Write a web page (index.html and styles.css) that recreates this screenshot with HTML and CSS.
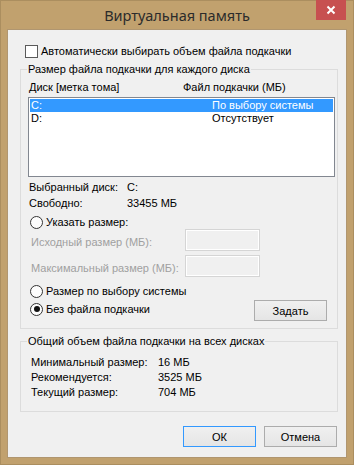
FILE: index.html
```html
<!DOCTYPE html>
<html lang="ru">
<head>
  <meta charset="UTF-8" />
  <title>Виртуальная память</title>
  <link rel="stylesheet" href="styles.css">
</head>
<body>
  <div class="window">
    <div class="titlebar">
      <div class="title">Виртуальная память</div>
      <button type="button" class="close" aria-label="Закрыть">
        <svg width="10" height="10" viewBox="0 0 10 10">
          <path d="M1.5 1.5 L8.5 8.5 M8.5 1.5 L1.5 8.5" stroke="#fff" stroke-width="2" fill="none"/>
        </svg>
      </button>
    </div>

    <div class="client">
      <label class="check-row">
        <span class="checkbox"></span>
        <span>Автоматически выбирать объем файла подкачки</span>
      </label>

      <!-- размер по дискам -->
      <fieldset class="group group-disks">
        <legend>Размер файла подкачки для каждого диска</legend>
        <div class="list-head">
          <span class="head-disk">Диск [метка тома]</span>
          <span>Файл подкачки (МБ)</span>
        </div>
        <div class="listbox">
          <div class="list-row selected">
            <span class="row-disk">C:</span>
            <span>По выбору системы</span>
          </div>
          <div class="list-row">
            <span class="row-disk">D:</span>
            <span>Отсутствует</span>
          </div>
        </div>

        <div class="info">
          <div class="info-row"><span class="info-label">Выбранный диск:</span><span>C:</span></div>
          <div class="info-row"><span class="info-label">Свободно:</span><span>33455 МБ</span></div>
        </div>

        <div class="radio-row radio-custom">
          <span class="radio"></span>
          <span>Указать размер:</span>
        </div>
        <div class="size-row">
          <span class="size-label">Исходный размер (МБ):</span>
          <span class="textbox"></span>
        </div>
        <div class="size-row size-max">
          <span class="size-label">Максимальный размер (МБ):</span>
          <span class="textbox"></span>
        </div>
        <div class="radio-row radio-system">
          <span class="radio"></span>
          <span>Размер по выбору системы</span>
        </div>
        <div class="last-row">
          <div class="radio-row">
            <span class="radio checked"></span>
            <span>Без файла подкачки</span>
          </div>
          <button type="button" class="btn btn-set">Задать</button>
        </div>
      </fieldset>

      <!-- общий объем -->
      <fieldset class="group group-total">
        <legend>Общий объем файла подкачки на всех дисках</legend>
        <div class="total-row"><span class="total-label">Минимальный размер:</span><span>16 МБ</span></div>
        <div class="total-row"><span class="total-label">Рекомендуется:</span><span>3525 МБ</span></div>
        <div class="total-row"><span class="total-label">Текущий размер:</span><span>704 МБ</span></div>
      </fieldset>

      <div class="dialog-buttons">
        <button type="button" class="btn btn-default">ОК</button>
        <button type="button" class="btn">Отмена</button>
      </div>
    </div>
  </div>
</body>
</html>
```

FILE: styles.css
```css
:root {
  --frame: #c1a16e;
  --client: #f0f0f0;
  --group-border: #dcdcdc;
  --disabled: #a0a0a0;
  --select: #3399ff;
  --font: "Liberation Sans", Arial, sans-serif;
}

html, body {
  margin: 0;
  padding: 0;
}

body {
  font-family: var(--font);
  font-size: 11px;
  color: #000;
  white-space: nowrap;
}

.window {
  width: 354px;
  height: 465px;
  box-sizing: border-box;
  background-color: var(--frame);
  box-shadow: inset 0 0 0 1px #ab8e5f;
  display: flex;
  flex-direction: column;
}

.titlebar {
  height: 30px;
  flex-shrink: 0;
  display: grid;
  grid-template-columns: 1fr auto 1fr;
}

.title {
  grid-column: 2;
  font-family: "Noto Sans", sans-serif;
  font-size: 14.5px;
  line-height: 30px;
  color: #2b2b2b;
}

.close {
  grid-column: 3;
  justify-self: end;
  align-self: start;
  width: 30px;
  height: 20px;
  margin-right: 8px;
  padding: 0;
  border: none;
  background-color: #c75050;
  display: flex;
  align-items: center;
  justify-content: center;
}

.client {
  flex: 1;
  min-height: 0;
  margin: 0 8px 8px;
  padding: 14px 8px 10px 12px;
  background-color: var(--client);
  box-shadow: 0 0 0 1px #b09670;
  display: flex;
  flex-direction: column;
}

.check-row {
  display: flex;
  align-items: center;
  gap: 3px;
  height: 15px;
  line-height: 15px;
  padding-left: 5px;
}

.checkbox {
  flex-shrink: 0;
  width: 11px;
  height: 11px;
  border: 1px solid #5a5a5a;
  background-color: #fff;
}

.group {
  margin: 0;
  min-width: 0;
  border: 1px solid var(--group-border);
  padding: 0 2px 0 7px;
}

.group legend {
  padding: 0 1px;
  margin-left: -1px;
  line-height: 15px;
}

.group-disks {
  margin-top: 3px;
  padding-top: 3px;
  padding-bottom: 7px;
}

.list-head {
  display: flex;
  line-height: 15px;
  padding-left: 1px;
}

.head-disk {
  flex-shrink: 0;
  width: 154px;
}

.listbox {
  margin-top: 2px;
  width: 307px;
  height: 80px;
  box-sizing: border-box;
  border: 1px solid #828790;
  background-color: #fff;
  padding: 1px;
}

.list-row {
  display: flex;
  height: 13px;
  line-height: 13px;
  padding-left: 1px;
}

.list-row.selected {
  background-color: var(--select);
  color: #fff;
}

.row-disk {
  flex-shrink: 0;
  width: 181px;
}

.info {
  margin-top: 2px;
  padding-left: 1px;
}

.info-row {
  display: flex;
  line-height: 16px;
}

.info-label {
  flex-shrink: 0;
  width: 98px;
}

.radio-row {
  display: flex;
  align-items: center;
  gap: 3px;
  height: 14px;
  line-height: 14px;
  padding-left: 2px;
}

.radio {
  flex-shrink: 0;
  width: 11px;
  height: 11px;
  border: 1px solid #333;
  border-radius: 50%;
  background-color: #fdfdfd;
  position: relative;
}

.radio.checked::after {
  content: "";
  position: absolute;
  left: 2.5px;
  top: 2.5px;
  width: 6px;
  height: 6px;
  border-radius: 50%;
  background-color: #111;
}

.radio-custom {
  margin-top: 4px;
}

.size-row {
  display: flex;
  align-items: center;
  height: 22px;
  padding-left: 3px;
  color: var(--disabled);
}

.size-label {
  flex-shrink: 0;
  width: 154px;
  padding-top: 3px;
}

.size-max {
  margin-top: 4px;
}

.textbox {
  flex-shrink: 0;
  width: 75px;
  height: 22px;
  box-sizing: border-box;
  border: 1px solid #d5d5d5;
  box-shadow: inset 0 0 0 1px #fff;
}

.radio-system {
  margin-top: 7px;
}

.last-row {
  margin-top: 2px;
  height: 21px;
  display: flex;
  justify-content: space-between;
  align-items: flex-start;
}

.last-row .radio-row {
  margin-top: 2px;
}

.btn {
  flex-shrink: 0;
  width: 73px;
  height: 21px;
  padding: 0;
  border: 1px solid #acacac;
  background: linear-gradient(#f0f0f0, #e5e5e5);
  font-family: var(--font);
  font-size: 11px;
  color: #000;
}

.btn-set {
  margin-right: 8px;
}

.btn-default {
  border-color: var(--select);
}

.group-total {
  margin-top: 5px;
  padding-top: 6px;
  padding-bottom: 11px;
}

.total-row {
  display: flex;
  line-height: 15px;
  padding-left: 3px;
}

.total-label {
  flex-shrink: 0;
  width: 127px;
}

.dialog-buttons {
  margin-top: 14px;
  display: flex;
  justify-content: flex-end;
  gap: 8px;
  padding-right: 1px;
}
```
